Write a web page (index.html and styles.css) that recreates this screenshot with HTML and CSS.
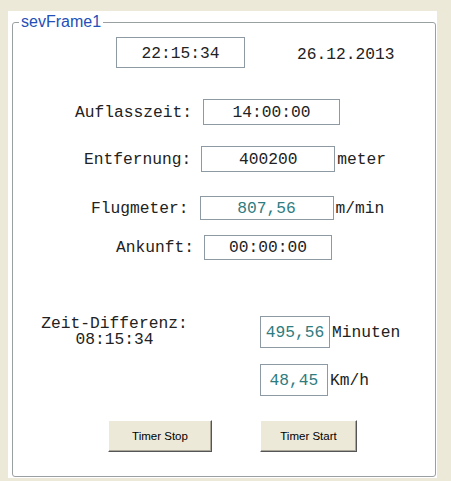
FILE: index.html
```html
<!DOCTYPE html>
<html lang="de">
<head>
  <meta charset="UTF-8">
  <title>sevFrame1</title>
  <link rel="stylesheet" href="styles.css">
</head>
<body>
  <div class="panel">
    <fieldset class="frame">
      <legend>sevFrame1</legend>

      <div class="row row-clock">
        <div class="box box-clock">22:15:34</div>
        <span class="date">26.12.2013</span>
      </div>

      <div class="row row-release">
        <span class="label">Auflasszeit:</span>
        <div class="box box-release">14:00:00</div>
      </div>

      <div class="row row-distance">
        <span class="label">Entfernung:</span>
        <div class="box box-distance">400200</div>
        <span class="unit">meter</span>
      </div>

      <div class="row row-speed">
        <span class="label">Flugmeter:</span>
        <div class="box box-speed value">807,56</div>
        <span class="unit">m/min</span>
      </div>

      <div class="row row-arrival">
        <span class="label">Ankunft:</span>
        <div class="box box-arrival">00:00:00</div>
      </div>

      <div class="row row-diff">
        <div class="diff">
          <div class="diff-line">Zeit-Differenz:</div>
          <div class="diff-line">08:15:34</div>
        </div>
        <div class="box box-small value">495,56</div>
        <span class="unit">Minuten</span>
      </div>

      <div class="row row-kmh">
        <div class="box box-small box-kmh value">48,45</div>
        <span class="unit">Km/h</span>
      </div>

      <div class="row row-buttons">
        <button type="button" class="btn btn-stop">Timer Stop</button>
        <button type="button" class="btn btn-start">Timer Start</button>
      </div>
    </fieldset>
  </div>
</body>
</html>
```

FILE: styles.css
```css
body {
  margin: 0;
  background: #ece9d8;
  font-family: "Liberation Mono", monospace;
  font-size: 16.25px;
  color: #222;
}
.panel {
  background: #fff;
  margin: 11px 14px 0 8px;
  height: 467px;
  padding: 2px 1px 1px 4px;
  box-sizing: border-box;
}
.frame {
  margin: 0;
  padding: 0;
  min-width: 0;
  height: 464px;
  box-sizing: border-box;
  border: 1px solid #9a9fa2;
  border-radius: 3px;
}
.frame legend {
  margin-left: 6px;
  padding: 0 2px;
  font-family: "Liberation Sans", Arial, sans-serif;
  font-size: 16px;
  line-height: 18px;
  color: #2350b8;
}
.row {
  display: flex;
  align-items: center;
}
.box {
  box-sizing: border-box;
  border: 1px solid #8d9aa4;
  text-align: center;
  line-height: 1;
}
.value {
  color: #2f7c80;
}
.unit {
  margin-left: 2px;
}

.row-clock {
  margin-top: 6px;
  height: 31px;
  padding-left: 103px;
}
.box-clock {
  width: 129px;
  height: 31px;
  padding-top: 8px;
}
.date {
  margin-left: 52px;
  padding-top: 3px;
}

.row-release {
  margin-top: 31px;
  height: 26px;
  padding-left: 62px;
}
.row-release .label {
  margin-right: 11px;
}
.box-release {
  width: 137px;
  height: 26px;
  padding-top: 5px;
}

.row-distance {
  margin-top: 21px;
  height: 26px;
  padding-left: 71px;
}
.row-distance .label {
  margin-right: 10px;
}
.box-distance {
  width: 134px;
  height: 26px;
  padding-top: 5px;
}

.row-speed {
  margin-top: 24px;
  height: 24px;
  padding-left: 78px;
}
.row-speed .label {
  margin-right: 11px;
}
.box-speed {
  width: 134px;
  height: 24px;
  padding-top: 4px;
}

.row-arrival {
  margin-top: 15px;
  height: 25px;
  padding-left: 103px;
}
.row-arrival .label {
  margin-right: 10px;
}
.box-arrival {
  width: 128px;
  height: 25px;
  padding-top: 4px;
}

.row-diff {
  margin-top: 56px;
  height: 32px;
  padding-left: 28px;
}
.diff {
  width: 147px;
  text-align: center;
  margin-right: 72px;
}
.diff-line {
  line-height: 16px;
}
.box-small {
  width: 70px;
  height: 32px;
  padding-top: 8px;
}

.row-kmh {
  margin-top: 16px;
  height: 32px;
  padding-left: 247px;
}
.box-kmh {
  width: 68px;
}

.row-buttons {
  margin-top: 24px;
  height: 32px;
  padding-left: 95px;
}
.btn {
  height: 32px;
  background: #ece9d8;
  border: 1px solid;
  border-color: #fff #555 #555 #fff;
  box-shadow: inset -1px -1px #aca899;
  font-family: "Liberation Sans", Arial, sans-serif;
  font-size: 11.5px;
  color: #000;
  padding: 0;
  cursor: pointer;
}
.btn-stop {
  width: 104px;
  margin-right: 48px;
}
.btn-start {
  width: 97px;
}
```
